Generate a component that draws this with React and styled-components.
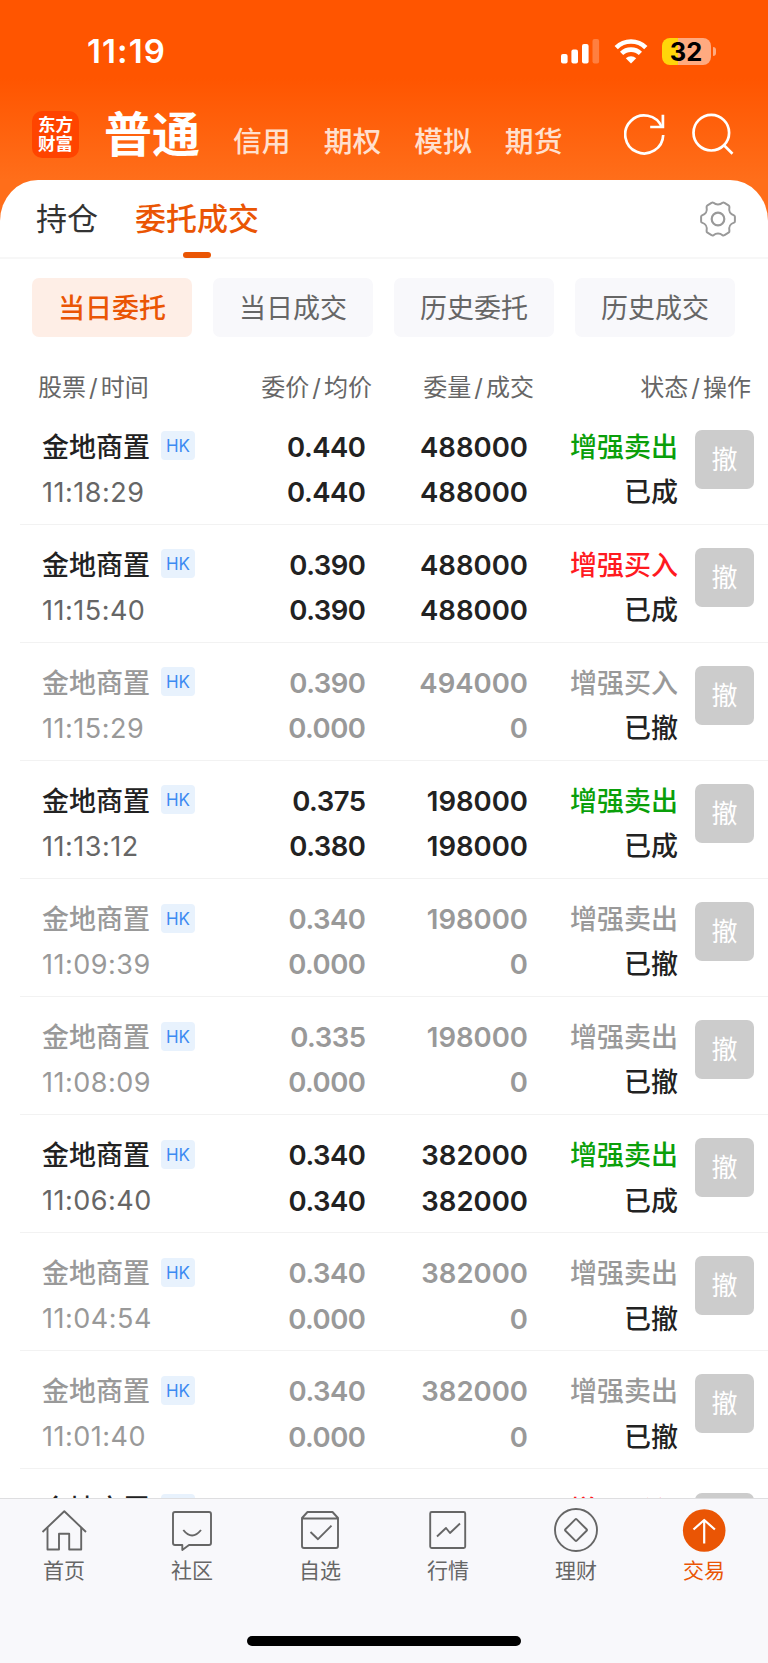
import React, { useState } from "react";
import styled, { createGlobalStyle } from "styled-components";

const GlobalStyle = createGlobalStyle`
  * {
    box-sizing: border-box;
  }

  body {
    margin: 0;
    background: #fff;
    font-family: Inter, "Noto Sans CJK SC", sans-serif;
    color: #222;
  }

  button {
    border: 0;
    padding: 0;
    background: none;
    font: inherit;
    color: inherit;
    cursor: pointer;
  }
`;

const Screen = styled.div`
  width: 768px;
  height: 1663px;
  display: flex;
  flex-direction: column;
  overflow: hidden;
  background: linear-gradient(#ff5500 0, #ff5500 78px, #ff6e1a 180px, #ff6e1a 240px);
`;

const StatusBar = styled.div`
  height: 102px;
  flex: none;
  display: flex;
  align-items: center;
  justify-content: space-between;
  padding: 0 52.5px 0 87px;
  color: #fff;
`;

const Clock = styled.span`
  font-size: 33px;
  font-weight: 600;
  letter-spacing: 1.1px;
  line-height: 40px;
`;

const StatusIcons = styled.div`
  display: flex;
  align-items: center;
  gap: 14px;
`;

const Battery = styled.div`
  display: flex;
  align-items: center;
  gap: 2px;
`;

const BatteryBody = styled.div`
  width: 49px;
  height: 27px;
  border-radius: 8px;
  background: linear-gradient(90deg, #ffd60a 32%, #ffaa80 32%);
  color: #000;
  font-size: 25.5px;
  font-weight: 700;
  line-height: 27px;
  text-align: center;
`;

const BatteryCap = styled.div`
  width: 3px;
  height: 9px;
  border-radius: 0 4px 4px 0;
  background: #ffaa80;
`;

const Header = styled.header`
  height: 77.5px;
  flex: none;
  display: flex;
  align-items: center;
  padding: 0 33.6px 0 32px;
  color: #fff;
`;

const Logo = styled.div`
  width: 47px;
  height: 47px;
  margin-top: -13px;
  padding-top: 4px;
  border-radius: 10px;
  background: #ff4400;
  font-size: 17.5px;
  font-weight: 700;
  line-height: 19.5px;
  text-align: center;
`;

const AccountNav = styled.nav`
  display: flex;
  align-items: baseline;
  gap: 33px;
  margin: -5px 0 0 25px;
`;

const Account = styled.button`
  font-size: ${({ $active }) => ($active ? "48px" : "28.8px")};
  font-weight: ${({ $active }) => ($active ? 700 : 500)};
  color: ${({ $active }) => ($active ? "#fff" : "#ffe0cf")};
  line-height: 60px;
  white-space: nowrap;
`;

const HeaderActions = styled.div`
  display: flex;
  gap: 26.4px;
  margin: -14px 0 0 auto;
`;

const Panel = styled.main`
  flex: 1;
  min-height: 0;
  display: flex;
  flex-direction: column;
  overflow: hidden;
  border-radius: 38px 38px 0 0 / 41px 41px 0 0;
  background: #fff;
`;

const Tabs = styled.div`
  height: 79.5px;
  flex: none;
  display: flex;
  align-items: center;
  gap: 37px;
  padding: 0 31px 0 36px;
  border-bottom: 2px solid #f7f7f7;
`;

const Tab = styled.button`
  position: relative;
  height: 79px;
  font-size: 31px;
  font-weight: ${({ $active }) => ($active ? 500 : 400)};
  color: ${({ $active }) => ($active ? "#ea5504" : "#333")};
  line-height: 80px;

  &::after {
    content: "";
    display: ${({ $active }) => ($active ? "block" : "none")};
    position: absolute;
    left: 50%;
    bottom: 0;
    width: 28px;
    height: 6px;
    margin-left: -14px;
    border-radius: 3px;
    background: #ea5504;
  }
`;

const SettingsButton = styled.button`
  margin: 2px 0 0 auto;
  height: 38px;
`;

const Filters = styled.div`
  flex: none;
  display: flex;
  gap: 21px;
  padding: 19px 0 0 32px;
`;

const Filter = styled.button`
  width: 160px;
  height: 59px;
  padding-top: 2px;
  border-radius: 7px;
  background: ${({ $active }) => ($active ? "#feeee6" : "#f8f8fb")};
  color: ${({ $active }) => ($active ? "#ea5504" : "#666")};
  font-size: 27px;
  font-weight: ${({ $active }) => ($active ? 500 : 400)};
  line-height: 57px;
`;

const columns = "190px 144px 162px 1fr";

const TableHead = styled.div`
  height: 69.5px;
  flex: none;
  display: grid;
  grid-template-columns: ${columns};
  padding: 17px 17px 0 38px;
  font-size: 24px;
  line-height: 68px;
  color: #666;
`;

const HeadCell = styled.span`
  text-align: ${({ $left }) => ($left ? "left" : "right")};
  white-space: nowrap;

  i {
    font-style: normal;
    margin: 0 3px;
  }
`;

const Orders = styled.div`
  flex: 1;
  min-height: 0;
  overflow: hidden;
`;

const Order = styled.div`
  height: 118.1px;
  margin-left: 20px;
  padding: 18.2px 14px 0 22px;
  display: grid;
  grid-template-columns: 180px 144px 162px 150px 1fr;
  border-bottom: 1.5px solid #f2f2f2;
  color: ${({ $dim }) => ($dim ? "#999" : "#222")};
`;

const Cell = styled.div`
  display: flex;
  flex-direction: column;
  align-items: ${({ $left }) => ($left ? "flex-start" : "flex-end")};
  font-size: 27.5px;
  font-weight: 600;
  line-height: 45.3px;
  white-space: nowrap;
`;

const Price = styled.span`
  margin-right: 0.5px;
  letter-spacing: -0.5px;
`;

const NameLine = styled.div`
  display: flex;
  align-items: center;
  height: 45px;
  gap: 11px;
  font-size: 27px;
  font-weight: 500;
`;

const Market = styled.span`
  width: 34px;
  height: 29px;
  margin-top: -3px;
  border-radius: 4px;
  background: #e8f2fd;
  color: #3d8bf2;
  font-size: 17px;
  font-weight: 400;
  line-height: 30px;
  text-align: center;
`;

const Time = styled.span`
  font-size: 27px;
  font-weight: 400;
  letter-spacing: 0.5px;
  color: ${({ $dim }) => ($dim ? "#999" : "#666")};
`;

const sideColors = { sell: "#0a9f0a", buy: "#ff1a1f" };

const Side = styled.span`
  font-size: 27px;
  font-weight: 500;
  color: ${({ $side, $dim }) => ($dim ? "#999" : sideColors[$side])};
`;

const State = styled.span`
  font-size: 27px;
  font-weight: 500;
  color: #222;
`;

const CancelButton = styled.button`
  width: 59px;
  height: 59px;
  margin-top: 5px;
  justify-self: end;
  border-radius: 7px;
  background: #ccc;
  color: #fff;
  font-size: 26px;
  line-height: 57px;
`;

const TabBar = styled.nav`
  height: 165px;
  flex: none;
  display: flex;
  flex-direction: column;
  align-items: center;
  justify-content: space-between;
  border-top: 1px solid #dedee0;
  background: #f8f8fb;
`;

const TabItems = styled.div`
  width: 100%;
  display: grid;
  grid-template-columns: repeat(6, 1fr);
`;

const TabItem = styled.button`
  display: flex;
  flex-direction: column;
  align-items: center;
  padding-top: 8px;
  color: ${({ $active }) => ($active ? "#ea5504" : "#666")};
  font-size: 21px;
  line-height: 30px;

  svg {
    display: block;
    margin-bottom: 3px;
  }
`;

const HomeIndicator = styled.div`
  width: 274px;
  height: 10px;
  margin-bottom: 17px;
  border-radius: 5px;
  background: #000;
`;

const SignalIcon = () => (
  <svg width="39" height="25" viewBox="0 0 39 25" fill="#fff">
    <rect x="0" y="15" width="6.6" height="9.5" rx="2" />
    <rect x="10.4" y="10.5" width="6.6" height="14" rx="2" />
    <rect x="21" y="5" width="6.6" height="19.5" rx="2" />
    <rect x="31.5" y="0" width="6.6" height="24.5" rx="2" opacity="0.25" />
  </svg>
);

const WifiIcon = () => (
  <svg width="34" height="25" viewBox="0 0 34 25" fill="none" stroke="#fff">
    <path d="M2.2 8.6a21 21 0 0 1 29.6 0" strokeWidth="4.6" />
    <path d="M7.6 14.4a13.5 13.5 0 0 1 18.8 0" strokeWidth="4.6" />
    <path d="M17 24.5l-5.2-5.2a7.5 7.5 0 0 1 10.4 0z" fill="#fff" stroke="none" />
  </svg>
);

const RefreshIcon = () => (
  <svg width="42" height="42" viewBox="0 0 42 42" fill="none" stroke="#fff" strokeWidth="2.7">
    <path d="M39.2 22a19 19 0 1 1-1.5-8" />
    <path d="M38.9 1.8v12.2H26.2" />
  </svg>
);

const SearchIcon = () => (
  <svg width="42" height="42" viewBox="0 0 42 42" fill="none" stroke="#fff" strokeWidth="2.7">
    <circle cx="19.3" cy="19.7" r="17.8" />
    <path d="M31.5 31.7l9 9" />
  </svg>
);

const GearIcon = () => (
  <svg width="38" height="38" viewBox="-19 -19 38 38" fill="none" stroke="#999" strokeWidth="2" strokeLinejoin="round">
    <path d="M-6.5 -16.1Q-5.5 -17 -4.5 -16.2C-2 -14 2 -14 4.5 -16.2Q5.5 -17 6.5 -16.1L10.5 -13.7Q11.5 -13 11.4 -12C10.5 -7 12 -5 16 -3.6Q16.9 -3.2 16.9 -2.2V2.2Q16.9 3.2 16 3.6C12 5 10.5 7 11.4 12Q11.5 13 10.5 13.7L6.5 16.1Q5.5 17 4.5 16.2C2 14 -2 14 -4.5 16.2Q-5.5 17 -6.5 16.1L-10.5 13.7Q-11.5 13 -11.4 12C-10.5 7 -12 5 -16 3.6Q-16.9 3.2 -16.9 2.2V-2.2Q-16.9 -3.2 -16 -3.6C-12 -5 -10.5 -7 -11.4 -12Q-11.5 -13 -10.5 -13.7Z" />
    <circle r="6.3" strokeWidth="2.2" />
  </svg>
);

const lineIcon = {
  width: 46,
  height: 46,
  viewBox: "0 0 46 46",
  fill: "none",
  stroke: "currentColor",
  strokeWidth: 1.9,
  strokeLinejoin: "round",
};

const HomeIcon = () => (
  <svg {...lineIcon}>
    <path d="M1.5 25L23.3 4.3L45 25" />
    <path d="M6.5 20.5v22h11.5V26.7h10.2v15.8h12V20.5" />
  </svg>
);

const CommunityIcon = () => (
  <svg {...lineIcon}>
    <path d="M6 5h34a2 2 0 0 1 2 2v29a2 2 0 0 1-2 2H20l-6.7 5v-5H6a2 2 0 0 1-2-2v-29a2 2 0 0 1 2-2z" />
    <path d="M14.3 23q8.8 11 17.7 0" />
  </svg>
);

const WatchlistIcon = () => (
  <svg {...lineIcon}>
    <path d="M5 11L10.5 5h25L41 11v28a2 2 0 0 1-2 2H7a2 2 0 0 1-2-2zM5 11.5h36" />
    <path d="M13.5 25l7.5 7.2l13.5-13.5" />
  </svg>
);

const MarketIcon = () => (
  <svg {...lineIcon}>
    <rect x="5.2" y="5" width="35" height="36" rx="1.5" />
    <path d="M12 29.5l9-8.5l4 5l10-9.5" />
  </svg>
);

const WealthIcon = () => (
  <svg {...lineIcon}>
    <circle cx="23" cy="23" r="21" />
    <rect x="15" y="15" width="16" height="16" rx="1" transform="rotate(45 23 23)" />
  </svg>
);

const TradeIcon = () => (
  <svg {...lineIcon}>
    <circle cx="23.2" cy="23.5" r="21.3" fill="currentColor" stroke="none" />
    <path d="M23.2 36.5V13M12.5 22.5l10.7-9.5l10.7 9.5" stroke="#fff" strokeWidth="2.2" />
  </svg>
);

const accounts = ["普通", "信用", "期权", "模拟", "期货"];
const tabs = ["持仓", "委托成交"];
const filters = ["当日委托", "当日成交", "历史委托", "历史成交"];

const heads = [
  ["股票", "时间"],
  ["委价", "均价"],
  ["委量", "成交"],
  ["状态", "操作"],
];

const orders = [
  { time: "11:18:29", price: "0.440", avg: "0.440", qty: "488000", filled: "488000", side: "sell" },
  { time: "11:15:40", price: "0.390", avg: "0.390", qty: "488000", filled: "488000", side: "buy" },
  { time: "11:15:29", price: "0.390", avg: "0.000", qty: "494000", filled: "0", side: "buy", cancelled: true },
  { time: "11:13:12", price: "0.375", avg: "0.380", qty: "198000", filled: "198000", side: "sell" },
  { time: "11:09:39", price: "0.340", avg: "0.000", qty: "198000", filled: "0", side: "sell", cancelled: true },
  { time: "11:08:09", price: "0.335", avg: "0.000", qty: "198000", filled: "0", side: "sell", cancelled: true },
  { time: "11:06:40", price: "0.340", avg: "0.340", qty: "382000", filled: "382000", side: "sell" },
  { time: "11:04:54", price: "0.340", avg: "0.000", qty: "382000", filled: "0", side: "sell", cancelled: true },
  { time: "11:01:40", price: "0.340", avg: "0.000", qty: "382000", filled: "0", side: "sell", cancelled: true },
  { side: "buy" },
];

const tabItems = [
  { label: "首页", icon: HomeIcon },
  { label: "社区", icon: CommunityIcon },
  { label: "自选", icon: WatchlistIcon },
  { label: "行情", icon: MarketIcon },
  { label: "理财", icon: WealthIcon },
  { label: "交易", icon: TradeIcon },
];

const OrderRow = ({ order }) => {
  const dim = order.cancelled;

  return (
    <Order $dim={dim}>
      <Cell $left>
        <NameLine>
          金地商置 <Market>HK</Market>
        </NameLine>
        <Time $dim={dim}>{order.time}</Time>
      </Cell>
      <Cell>
        <Price>{order.price}</Price>
        <Price>{order.avg}</Price>
      </Cell>
      <Cell>
        <span>{order.qty}</span>
        <span>{order.filled}</span>
      </Cell>
      <Cell>
        <Side $side={order.side} $dim={dim}>
          {order.side === "sell" ? "增强卖出" : "增强买入"}
        </Side>
        {order.time && <State>{dim ? "已撤" : "已成"}</State>}
      </Cell>
      <CancelButton>{order.time && "撤"}</CancelButton>
    </Order>
  );
};

const App = () => {
  const [account, setAccount] = useState("普通");
  const [tab, setTab] = useState("委托成交");
  const [filter, setFilter] = useState("当日委托");
  const [page, setPage] = useState("交易");

  return (
    <Screen>
      <GlobalStyle />
      <StatusBar>
        <Clock>11:19</Clock>
        <StatusIcons>
          <SignalIcon />
          <WifiIcon />
          <Battery>
            <BatteryBody>32</BatteryBody>
            <BatteryCap />
          </Battery>
        </StatusIcons>
      </StatusBar>

      <Header>
        <Logo>
          东方
          <br />
          财富
        </Logo>
        <AccountNav>
          {accounts.map((name) => (
            <Account key={name} $active={name === account} onClick={() => setAccount(name)}>
              {name}
            </Account>
          ))}
        </AccountNav>
        <HeaderActions>
          <RefreshIcon />
          <SearchIcon />
        </HeaderActions>
      </Header>

      <Panel>
        <Tabs>
          {tabs.map((name) => (
            <Tab key={name} $active={name === tab} onClick={() => setTab(name)}>
              {name}
            </Tab>
          ))}
          <SettingsButton aria-label="设置">
            <GearIcon />
          </SettingsButton>
        </Tabs>

        <Filters>
          {filters.map((name) => (
            <Filter key={name} $active={name === filter} onClick={() => setFilter(name)}>
              {name}
            </Filter>
          ))}
        </Filters>

        <TableHead>
          {heads.map(([first, second], i) => (
            <HeadCell key={first} $left={i === 0}>
              {first}
              <i>/</i>
              {second}
            </HeadCell>
          ))}
        </TableHead>

        <Orders>
          {orders.map((order, i) => (
            <OrderRow key={i} order={order} />
          ))}
        </Orders>
      </Panel>

      <TabBar>
        <TabItems>
          {tabItems.map(({ label, icon: Icon }) => (
            <TabItem key={label} $active={label === page} onClick={() => setPage(label)}>
              <Icon />
              {label}
            </TabItem>
          ))}
        </TabItems>
        <HomeIndicator />
      </TabBar>
    </Screen>
  );
};

export default App;
